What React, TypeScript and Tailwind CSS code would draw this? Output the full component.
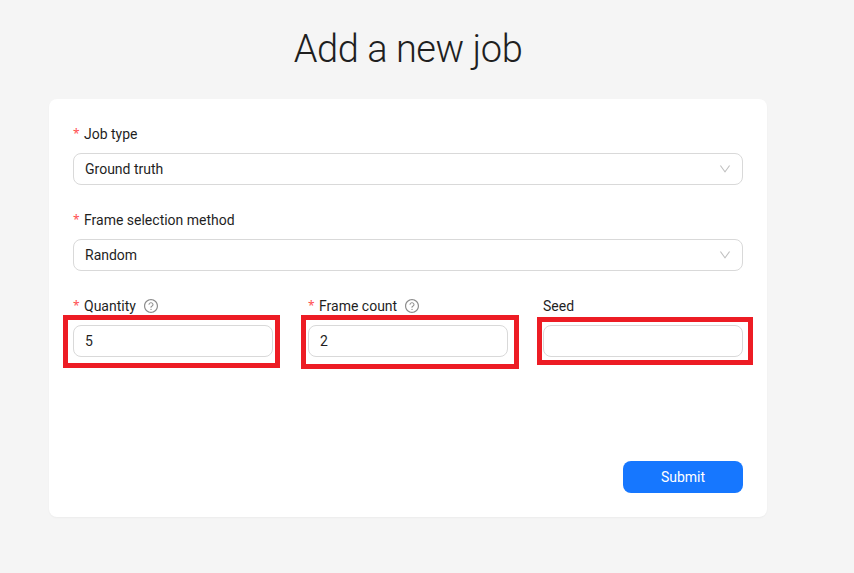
import React from "react";

function HelpIcon() {
  return (
    <svg viewBox="64 64 896 896" className="ml-2 h-[14px] w-[14px] fill-black/45">
      <path d="M512 64C264.6 64 64 264.6 64 512s200.6 448 448 448 448-200.6 448-448S759.4 64 512 64zm0 820c-205.4 0-372-166.6-372-372s166.6-372 372-372 372 166.6 372 372-166.6 372-372 372z" />
      <path d="M623.6 316.7C593.6 290.4 554 276 512 276s-81.6 14.5-111.6 40.7C369.2 344 352 380.7 352 420v7.6c0 4.4 3.6 8 8 8h48c4.4 0 8-3.6 8-8V420c0-44.1 43.1-80 96-80s96 35.9 96 80c0 31.1-22 59.6-56.1 72.7-21.2 8.1-39.2 22.3-52.1 40.9-13.1 19-19.9 41.8-19.9 64.9V620c0 4.4 3.6 8 8 8h48c4.4 0 8-3.6 8-8v-22.7a48.3 48.3 0 0 1 30.9-44.8c59-22.7 97.1-74.7 97.1-132.5.1-39.3-17.1-76-48.3-103.3z" />
      <path d="M472 732a40 40 0 1 0 80 0 40 40 0 1 0-80 0z" />
    </svg>
  );
}

function Label({ text, required, help }: { text: string; required?: boolean; help?: boolean }) {
  return (
    <div className="mb-2 flex h-[22px] items-center text-[#1f1f1f]">
      {required && <span className="mr-[4px] w-[7px] font-['Noto_Sans',sans-serif] text-xs text-[#ff4d4f]">*</span>}
      <span>{text}</span>
      {help && <HelpIcon />}
    </div>
  );
}

function SelectField({ label, value }: { label: string; value: string }) {
  return (
    <div className="mb-6">
      <Label text={label} required />
      <div className="flex h-8 items-center justify-between rounded-lg border border-[#d9d9d9] bg-white pl-[11px] pr-[11px] text-[#1f1f1f]">
        <span>{value}</span>
        <svg viewBox="64 64 896 896" className="h-3 w-3 fill-black/25">
          <path d="M884 256h-75c-5.1 0-9.9 2.5-12.9 6.6L512 654.2 227.9 262.6c-3-4.1-7.8-6.6-12.9-6.6h-75c-6.5 0-10.3 7.4-6.5 12.7l352.6 486.1c12.8 17.6 39 17.6 51.7 0l352.6-486.1c3.9-5.3.1-12.7-6.4-12.7z" />
        </svg>
      </div>
    </div>
  );
}

export default function App() {
  return (
    <div className="min-h-[573px] bg-[#f5f5f5] font-['Roboto',sans-serif] text-sm">
      <div className="ml-[49px] w-[718px]">
        <h1 className="flex h-[99px] items-center justify-center text-[38px] font-light tracking-[-0.45px] text-[#1f1f1f]">
          Add a new job
        </h1>

        <div className="rounded-lg bg-white p-6 shadow-[0_1px_2px_rgba(0,0,0,0.04)]">
          <SelectField label="Job type" value="Ground truth" />
          <SelectField label="Frame selection method" value="Random" />

          <div className="grid grid-cols-3 gap-[35px]">
            <div>
              <Label text="Quantity" required help />
              <div className="relative">
                <div className="flex h-8 items-center rounded-lg border border-[#d9d9d9] px-[11px] text-[#1f1f1f]">5</div>
                <div className="absolute -top-[10px] -right-[7px] -bottom-[11px] -left-[10px] border-[5px] border-[#ed1c24]" />
              </div>
            </div>
            <div>
              <Label text="Frame count" required help />
              <div className="relative">
                <div className="flex h-8 items-center rounded-lg border border-[#d9d9d9] px-[11px] text-[#1f1f1f]">2</div>
                <div className="absolute -top-[10px] -right-[11px] -bottom-[12px] -left-[7px] border-[5px] border-[#ed1c24]" />
              </div>
            </div>
            <div>
              <Label text="Seed" />
              <div className="relative">
                <div className="h-8 rounded-lg border border-[#d9d9d9]" />
                <div className="absolute -top-[8px] -right-[10px] -bottom-[8px] -left-[6px] border-[5px] border-[#ed1c24]" />
              </div>
            </div>
          </div>

          <div className="mt-[104px] flex justify-end">
            <button className="h-8 w-[120px] rounded-lg bg-[#1677ff] text-white">Submit</button>
          </div>
        </div>
      </div>
    </div>
  );
}
